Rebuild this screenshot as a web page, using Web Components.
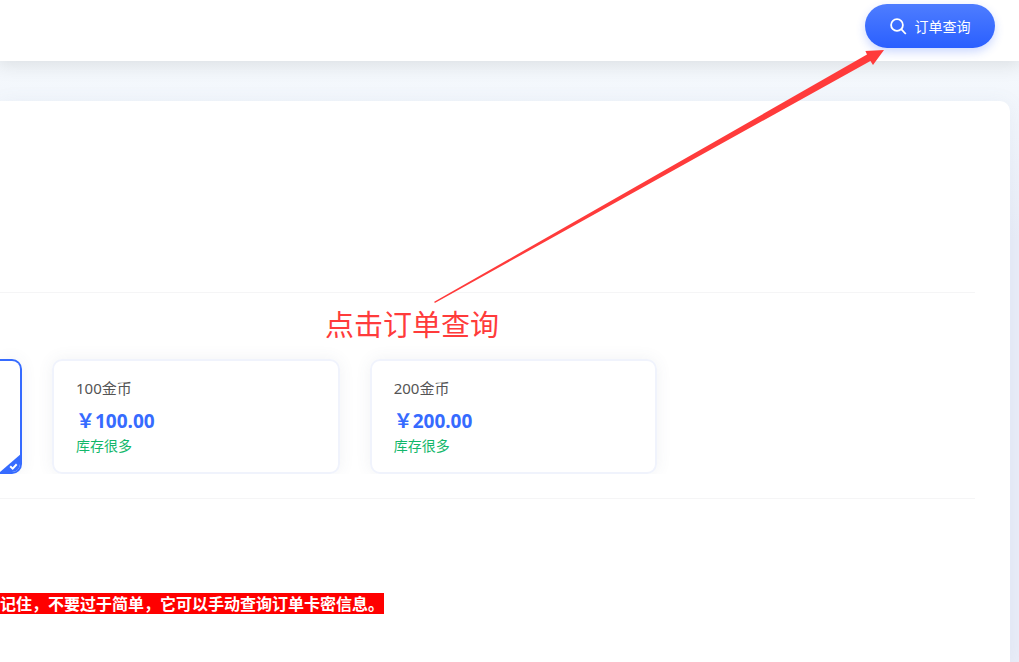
<!DOCTYPE html>
<html lang="zh-CN">
<head>
<meta charset="utf-8">
<meta name="viewport" content="width=device-width, initial-scale=1">
<title>订单查询</title>
<style>
  html, body { margin: 0; min-height: 100%; }
  body {
    font-family: "Noto Sans", "Noto Sans CJK SC", sans-serif;
    color: #545454;
    background: #e9edf7;
  }
</style>
</head>
<body>
<shop-page>
  <site-header slot="header">
    <query-button>订单查询</query-button>
  </site-header>
  <goods-panel>
    <package-list slot="packages">
      <package-card selected label="已选套餐"></package-card>
      <package-card price="¥100.00" stock="库存很多">100金币</package-card>
      <package-card price="¥200.00" stock="库存很多">200金币</package-card>
    </package-list>
    <notice-text slot="notice">记住，不要过于简单，它可以手动查询订单卡密信息。</notice-text>
  </goods-panel>
  <guide-arrow slot="guide">点击订单查询</guide-arrow>
</shop-page>
<script>
const define = (name, html, setup) => {
  const template = document.createElement('template');
  template.innerHTML = html;
  customElements.define(name, class extends HTMLElement {
    constructor() {
      super();
      this.attachShadow({ mode: 'open' }).append(template.content.cloneNode(true));
    }
    connectedCallback() { if (setup) setup(this, this.shadowRoot); }
  });
};

define('shop-page', `
<style>
  :host { display: flex; flex-direction: column; position: relative; min-height: 100vh; overflow: hidden;
    background: linear-gradient(#f5f9fd 60px, #e9edf8 240px); }
  main { display: flex; flex: 1; padding: 40px 9px 0 0; }
</style>
<slot name="header"></slot>
<main><slot></slot></main>
<slot name="guide"></slot>`);

define('site-header', `
<style>
  :host { display: block; position: relative; background: #fff; box-shadow: 0 0 18px 4px rgba(0,0,0,.11); }
  header { display: flex; justify-content: flex-end; padding: 4px 24px 13px; }
</style>
<header><slot></slot></header>`);

define('query-button', `
<style>
  :host { display: block; }
  button { display: flex; align-items: center; justify-content: center; gap: 8px;
    width: 130px; height: 44px; padding: 0; border: 0; border-radius: 22px; cursor: pointer;
    font: 400 14px/20px "Noto Sans", "Noto Sans CJK SC", sans-serif; color: #fff;
    background: linear-gradient(#4e7dff, #2a5fff); box-shadow: 0 4px 10px rgba(45,95,255,.24); }
  svg { display: block; width: 17px; height: 17px; }
  span { padding-top: 2px; }
</style>
<button type="button">
  <svg viewBox="0 0 17 17" fill="none" stroke="#fff" stroke-width="1.8" aria-hidden="true">
    <circle cx="7" cy="7" r="5.9"/><path d="M11.2 11.2l4.6 4.8"/>
  </svg>
  <span><slot></slot></span>
</button>`);

define('goods-panel', `
<style>
  :host { display: block; flex: 1; min-width: 0; background: #fff; border-top-right-radius: 10px;
    box-shadow: 0 2px 20px rgba(120,140,170,.08); }
  .cover { height: 191px; }
  .cover, .packages { margin-right: 35px; border-bottom: 1px solid #f5f5f6; }
  .packages { padding: 48px 0 24px; }
  .notice { padding-top: 94px; }
</style>
<section class="cover"></section>
<section class="packages"><slot name="packages"></slot></section>
<section class="notice"><slot name="notice"></slot></section>`);

define('package-list', `
<style>
  :host { display: grid; grid-template-columns: 22px repeat(3, minmax(0, 1fr)); gap: 30px;
    padding-top: 18px; overflow: hidden; }
</style>
<slot></slot>`);

define('package-card', `
<style>
  :host { display: block; }
  label { display: block; position: relative; box-sizing: border-box; height: 115px; padding: 15px 22px;
    border: 2px solid #f0f3fc; border-radius: 10px; background: #fff; overflow: hidden; cursor: pointer; }
  :host { border-radius: 10px; box-shadow: 0 0 16px rgba(80,90,110,.08); }
  input { position: absolute; inset: 0; margin: 0; appearance: none; outline: 0; }
  .name { display: block; font-size: 15px; line-height: 24px; }
  .price { display: block; margin-top: 8px; font-size: 19px; line-height: 26px; font-weight: 700; color: #366bff; }
  .stock { display: block; font-size: 14px; line-height: 24px; color: #12b76a; }
  .tick { display: none; position: absolute; right: -2px; bottom: -2px; width: 22px; height: 21px; }
  :host([selected]) label { border-color: #366bff; border-left: 0; padding: 0;
    border-top-left-radius: 0; border-bottom-left-radius: 0; }
  :host([selected]) .tick { display: block; }
  :host([selected]) .text { display: none; }
</style>
<label>
  <input type="radio">
  <span class="text">
    <span class="name"><slot></slot></span>
    <span class="price"></span>
    <span class="stock"></span>
  </span>
  <svg class="tick" viewBox="0 0 22 21" aria-hidden="true">
    <path d="M22 0V21H0V19z" fill="#366bff"/>
    <path d="M10.2 13.2l2.5 2.4 4-4.3" fill="none" stroke="#fff" stroke-width="2"/>
  </svg>
</label>`, (host, root) => {
  const input = root.querySelector('input');
  input.checked = host.hasAttribute('selected');
  if (host.hasAttribute('label')) input.setAttribute('aria-label', host.getAttribute('label'));
  // prices use the full-width yen sign
  root.querySelector('.price').textContent = (host.getAttribute('price') || '').replace('\u00a5', '\uffe5');
  root.querySelector('.stock').textContent = host.getAttribute('stock') || '';
});

define('notice-text', `
<style>
  :host { display: flex; }
  strong { background: #f00; color: #fff; font-size: 16px; line-height: 21px; font-weight: 700;
    font-family: "Noto Sans CJK SC", sans-serif; }
</style>
<strong><slot></slot></strong>`);

define('guide-arrow', `
<style>
  :host { position: absolute; top: 49px; right: 134px; width: 560px; color: #ff3b3b; pointer-events: none; }
  svg { display: block; width: 451px; height: 255px; margin-left: auto; }
  p { margin: 0; font-size: 29px; line-height: 42px; }
</style>
<svg viewBox="0 0 451 255" aria-hidden="true">
  <path d="M.8 254L.2 252.8 433 5.6 431.4 2 450 1 439 16 436.4 12z" fill="#ff3b3b"/>
</svg>
<p><slot></slot></p>`);
</script>
</body>
</html>
